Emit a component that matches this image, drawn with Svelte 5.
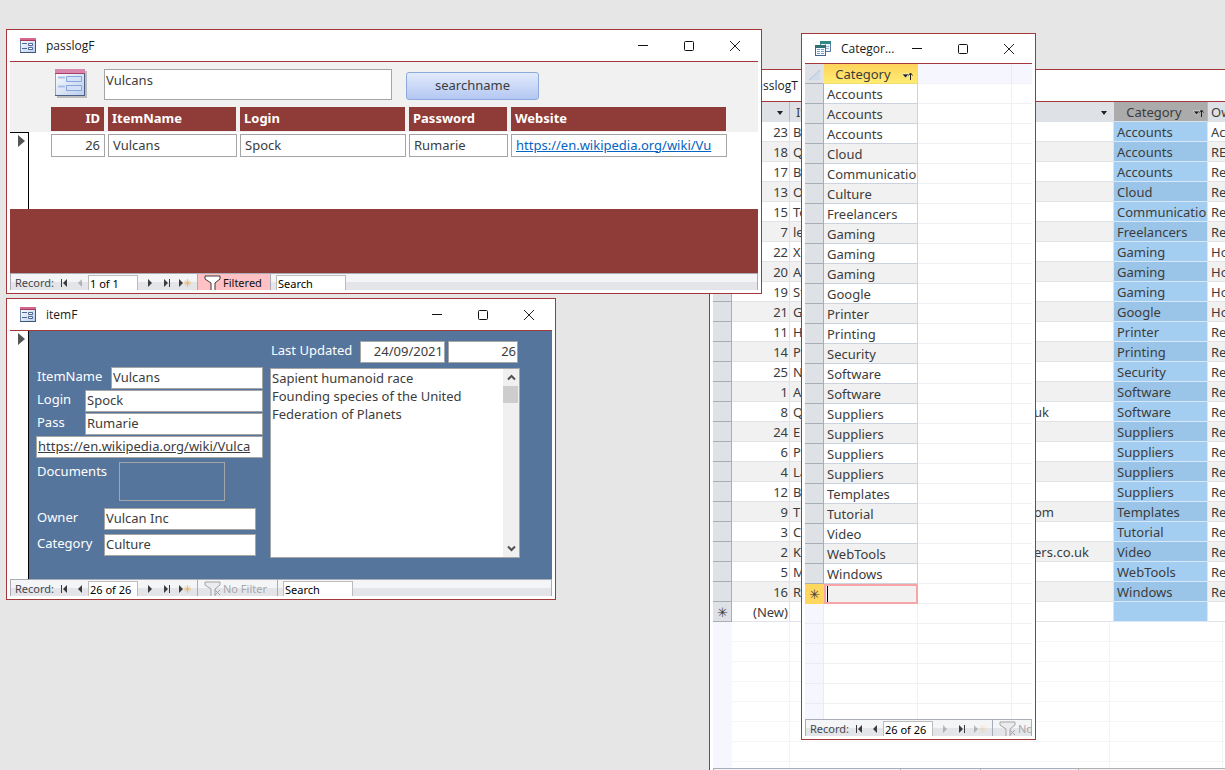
<script>
  const categories = ['Accounts','Accounts','Accounts','Cloud','Communications','Culture','Freelancers','Gaming','Gaming','Gaming','Google','Printer','Printing','Security','Software','Software','Suppliers','Suppliers','Suppliers','Suppliers','Templates','Tutorial','Video','WebTools','Windows'];
  const log = [
    [23,'B','','Accounts','Ac'],[18,'Q','','Accounts','RE'],[17,'B','','Accounts','Re'],[13,'O','','Cloud','Re'],
    [15,'Te','','Communications','Re'],[7,'le','','Freelancers','Re'],[22,'X','','Gaming','Ho'],[20,'A','','Gaming','Ho'],
    [19,'St','','Gaming','Ho'],[21,'G','','Google','Ho'],[11,'H','','Printer','Re'],[14,'P','','Printing','Re'],
    [25,'N','','Security','Re'],[1,'A','','Software','Re'],[8,'Q','uk','Software','Re'],[24,'E','','Suppliers','Re'],
    [6,'P','','Suppliers','Re'],[4,'La','','Suppliers','Re'],[12,'B','','Suppliers','Re'],[9,'T','om','Templates','Re'],
    [3,'C','','Tutorial','Re'],[2,'K','ers.co.uk','Video','Re'],[5,'M','','WebTools','Re'],[16,'R','','Windows','Re']
  ];
</script>

{#snippet formIcon()}
  <svg class="ticon" viewBox="0 0 16 15" width="16" height="15">
    <defs><linearGradient id="fg" x1="0" y1="0" x2="1" y2="1"><stop offset="0" stop-color="#fff" /><stop offset="1" stop-color="#b9cdec" /></linearGradient></defs>
    <rect x=".5" y=".5" width="15" height="14" fill="url(#fg)" stroke="#6f86ad" />
    <path d="M0 0h16v3H0z" fill="#d4668c" /><path d="M0 2h16v1H0z" fill="#a63d5f" />
    <path d="M15.500 3v12M0 14.500h16" stroke="#3f5878" fill="none" />
    <path d="M2 5.500h5M2 10.500h5" stroke="#4d6795" />
    <path d="M8.500 5.500h4v2h-4zM8.500 9.500h4v2h-4z" fill="#fff" stroke="#4d6795" />
  </svg>
{/snippet}

{#snippet sortMark()}
  <svg class="mark" viewBox="0 0 11 9" width="11" height="9"><path d="M0 2h7L3.500 6z" fill="#222" stroke="#fff" stroke-width=".6" /><path d="M8.500 8V1.500M6.500 3.500l2-2.500 2 2.500" fill="none" stroke="#222" /></svg>
{/snippet}

{#snippet titleBar(name, icon)}
  <header class="title">
    {@render icon()}
    <h2>{name}</h2>
    <button aria-label="Minimize"><svg width="12" height="12" viewBox="0 0 12 12"><path d="M1 5.500h10" stroke="#111" /></svg></button>
    <button aria-label="Maximize"><svg width="12" height="12" viewBox="0 0 12 12"><rect x="1.500" y="1.500" width="9" height="9" rx="1" fill="none" stroke="#111" /></svg></button>
    <button aria-label="Close"><svg width="12" height="12" viewBox="0 0 12 12"><path d="M1 1l10 10M11 1L1 11" stroke="#222" /></svg></button>
  </header>
{/snippet}

{#snippet tableIcon()}
  <svg class="ticon" viewBox="0 0 16 15" width="16" height="15">
    <rect x="5.500" y=".5" width="10" height="10" fill="#eef4fb" stroke="#5a7ea8" /><path d="M5 0h11v3H5z" fill="#2f8a86" />
    <path d="M7 5.500h7M7 7.500h7M10.500 3v7" stroke="#9db6d4" />
    <rect x=".5" y="4.500" width="10" height="10" fill="#f7faff" stroke="#48648c" /><path d="M0 4h11v3H0z" fill="#32706f" />
    <path d="M2 8.500h3M6 8.500h3M2 10.500h3M6 10.500h3M2 12.500h3M6 12.500h3" stroke="#7f9cc2" />
  </svg>
{/snippet}

{#snippet recordBar(position, filtered, atFirst, atLast)}
  <footer class="bar">
    <span class="rec">Record:</span>
    <button aria-label="First record"><svg width="8" height="8" viewBox="0 0 8 8"><path d="M0 0h1v8H0zM6 0v8L2 4z" fill="#3c3c40" /></svg></button>
    <button class="prev" class:off={atFirst} aria-label="Previous record"><svg width="5" height="8" viewBox="0 0 5 8"><path d="M4 0v8L0 4z" fill="#3c3c40" /></svg></button>
    <input class="pos" aria-label="Current record" value={position} />
    <button class="next" class:off={atLast} aria-label="Next record"><svg width="5" height="8" viewBox="0 0 5 8"><path d="M0 0v8l4-4z" fill="#3c3c40" /></svg></button>
    <button class="last" aria-label="Last record"><svg width="7" height="8" viewBox="0 0 7 8"><path d="M0 0v8l4-4zM5 0h1v8H5z" fill="#3c3c40" /></svg></button>
    <button class="new" class:off={atLast} aria-label="New record"><svg width="13" height="8" viewBox="0 0 13 8"><path d="M0 0v8l4-4z" fill="#3c3c40" /><path d="M8.500 0v8M5 4h7M6 1.500l5 5M11 1.500l-5 5" stroke="#e8b45c" stroke-width=".8" /></svg></button>
    <button class="filter" class:on={filtered}>
      <svg width="18" height="16" viewBox="0 0 18 16"><path d="M1 1h15v3l-5 4v8H7V8L1 4z" fill={filtered ? '#fff' : '#ececee'} stroke={filtered ? '#3a3a3a' : '#a3a3a8'} />{#if !filtered}<path d="M11 9l5 5M16 9l-5 5" stroke="#a3a3a8" />{/if}</svg>
      <span>{filtered ? 'Filtered' : 'No Filter'}</span>
    </button>
    <input class="search" aria-label="Search records" value="Search" />
  </footer>
{/snippet}

<main>
  <section class="win log">
    {@render titleBar('passlogT', tableIcon)}
    <div class="body sheet">
      <table>
        <colgroup><col class="c-sel" /><col class="c-id" /><col class="c-item" /><col class="c-web" /><col class="c-cat" /><col class="c-own" /></colgroup>
        <thead><tr><th></th><th class="arrow"><i></i></th><th class="left">ItemName</th><th class="arrow nb"><i></i></th><th class="picked">Category {@render sortMark()}</th><th class="own">Owner</th></tr></thead>
        <tbody>
          {#each log as [id, item, web, cat, owner]}
            <tr><th></th><td class="num">{id}</td><td class="nob">{item}</td><td>{web}</td><td class="hl">{cat}</td><td>{owner}</td></tr>
          {/each}
          <tr><th class="star">✳</th><td class="num">(New)</td><td class="nob"></td><td></td><td class="hl"></td><td></td></tr>
        </tbody>
      </table>
      <div class="void"><span></span><span></span><span></span></div>
      <div class="foot">{@render recordBar('', false, false, false)}<div class="hscroll"></div></div>
    </div>
  </section>

  <section class="win pass">
    {@render titleBar('passlogF', formIcon)}
    <div class="body passbody">
      <div class="finder">
        <svg width="34" height="32" viewBox="0 0 34 32">
          <path d="M3 3h30v27H3z" fill="#000" opacity=".22" />
          <rect x="1.500" y="1.500" width="29" height="26" fill="url(#fg)" stroke="#8ca3c8" />
          <path d="M1 1h30v5H1z" fill="#d887aa" /><path d="M1 5h30v1H1z" fill="#a6406c" /><path d="M30.500 6v22M1 27.500h30" stroke="#4a6084" />
          <path d="M4 9.500h7M4 18.500h7" stroke="#a9c0e6" stroke-width="2" />
          <path d="M12.500 8.500h15v5h-15zM12.500 17.500h15v5h-15z" fill="#d3e0f5" stroke="#86a5dc" />
        </svg>
        <input aria-label="Name to find" value="Vulcans" />
        <button>searchname</button>
      </div>
      <div class="detail">
        <div class="selector"><svg width="7" height="12" viewBox="0 0 7 12"><path d="M0 0v12l7-6z" fill="#555" /></svg></div>
        <table>
          <colgroup><col style:width="54px" /><col style:width="129px" /><col style:width="166px" /><col style:width="99px" /><col style:width="216px" /></colgroup>
          <thead><tr><th class="r">ID</th><th>ItemName</th><th>Login</th><th>Password</th><th>Website</th></tr></thead>
          <tbody><tr><td class="r">26</td><td>Vulcans</td><td>Spock</td><td>Rumarie</td><td><a href="https://en.wikipedia.org/wiki/Vulcan">https://en.wikipedia.org/wiki/Vu</a></td></tr></tbody>
        </table>
      </div>
      <div class="band"></div>
      {@render recordBar('1 of 1', true, true, false)}
    </div>
  </section>

  <section class="win item">
    {@render titleBar('itemF', formIcon)}
    <div class="body">
      <div class="form">
        <div class="rail"><svg width="7" height="12" viewBox="0 0 7 12"><path d="M0 0v12l7-6z" fill="#555" /></svg></div>
        <div class="blue">
          <div class="fields">
            <label><span class="w75">ItemName</span><input value="Vulcans" /></label>
            <label><span class="w49">Login</span><input value="Spock" /></label>
            <label><span class="w49">Pass</span><input value="Rumarie" /></label>
            <input class="url" aria-label="Website" value="https://en.wikipedia.org/wiki/Vulca" />
            <div class="docs"><span>Documents</span><button aria-label="Documents"></button></div>
            <label class="short own"><span class="w68">Owner</span><input value="Vulcan Inc" /></label>
            <label class="short"><span class="w68">Category</span><input value="Culture" /></label>
          </div>
          <div class="notes">
            <div class="stamp"><label for="upd">Last Updated</label><input id="upd" value="24/09/2021" /><input class="no" aria-label="Record number" value="26" /></div>
            <div class="memo">
              <textarea aria-label="Notes" value={'Sapient humanoid race\nFounding species of the United\nFederation of Planets'}></textarea>
              <div class="scroll">
                <button aria-label="Scroll up"><svg width="9" height="7" viewBox="0 0 9 7"><path d="M1 5.500L4.500 2 8 5.500" fill="none" stroke="#505050" stroke-width="2" /></svg></button>
                <i></i>
                <button aria-label="Scroll down"><svg width="9" height="7" viewBox="0 0 9 7"><path d="M1 1.500L4.500 5 8 1.500" fill="none" stroke="#505050" stroke-width="2" /></svg></button>
              </div>
            </div>
          </div>
        </div>
      </div>
      {@render recordBar('26 of 26', false, false, false)}
    </div>
  </section>

  <section class="win cats">
    {@render titleBar('Categor...', tableIcon)}
    <div class="body">
      <div class="rows">
        <table>
          <colgroup><col class="k-sel" /><col class="k-cat" /><col /><col class="k-end" /></colgroup>
          <thead><tr><th><svg width="13" height="12" viewBox="0 0 13 12"><path d="M12 1v10H1z" fill="#d0dae8" /><path d="M1 11L12 1" stroke="#b4c6dd" fill="none" /></svg></th><th class="gold">Category {@render sortMark()}</th><th class="pale"></th><th class="pale"></th></tr></thead>
          <tbody>
            {#each categories as c}<tr><th></th><td class="val">{c}</td><td></td><td></td></tr>{/each}
            <tr class="fresh"><th>✳</th><td class="val"><i></i></td><td></td><td></td></tr>
            {#each Array(6) as _}<tr class="blank"><th></th><td></td><td></td><td></td></tr>{/each}
          </tbody>
        </table>
      </div>
      {@render recordBar('26 of 26', false, false, true)}
    </div>
  </section>
</main>

<style>
  :global(body) { background: #e6e6e6; overflow: hidden; }
  main { position: relative; height: 100vh; overflow: hidden; font: 13px/18px "Noto Sans", "Open Sans", sans-serif; color: #3c3c3c; }
  *, *::before { box-sizing: border-box; }
  button { border: 0; background: none; padding: 0; font: inherit; color: inherit; display: flex; align-items: center; justify-content: center; flex: none; }
  input, textarea { font: inherit; color: inherit; border: 1px solid #a5a5a5; border-radius: 0; background: #fff; margin: 0; padding: 0 1px 2px; outline: 0; min-width: 0; }
  table { table-layout: fixed; border-spacing: 0; }
  th, td { padding: 0; font-weight: 400; white-space: nowrap; overflow: hidden; }

  .win { position: absolute; display: flex; flex-direction: column; background: #fff; border: 1px solid #a4373a; padding: 0 3px 3px; }
  .log { left: 709px; top: 69px; right: -140px; bottom: -19px; }
  .pass { left: 6px; top: 29px; width: 756px; height: 265px; }
  .item { left: 6px; top: 298px; width: 550px; height: 302px; }
  .cats { left: 801px; top: 33px; width: 235px; height: 707px; }

  .title { height: 32px; flex: none; display: flex; align-items: center; border-bottom: 1px solid #a4373a; padding-left: 10px; }
  .cats .title { height: 30px; }
  .title .ticon { flex: none; }
  .title h2 { flex: 1; min-width: 0; margin: 0 0 0 10px; font: 12px/18px "Open Sans", sans-serif; color: #1a1a1a; white-space: nowrap; }
  .title button { width: 46px; height: 28px; }
  .body { flex: 1; display: flex; flex-direction: column; min-height: 0; overflow: hidden; }

  .bar { height: 17px; flex: none; display: flex; align-items: flex-start; overflow: hidden; font: 11px/18px "Noto Sans", sans-serif; color: #44484f; border: 1px solid #a9adb8; border-bottom: 0; background: linear-gradient(#f4f5f7 50%, #e4e5e9 50%); padding-left: 4px; }
  .bar button { height: 17px; }
  .rec { width: 46px; flex: none; }
  .prev { margin-left: 9px; }
  .bar input { height: 15px; margin-top: 1px; border-color: #bcbcbc; border-bottom: 0; padding-bottom: 0; color: #000; flex: none; line-height: 14px; }
  .pos { width: 50px; margin-left: 5px !important; }
  .next { margin-left: 10px; }
  .last { margin-left: 11px; }
  .new { margin-left: 8px; }
  .off { opacity: .3; }
  .bar .filter { margin-left: 5px; height: 17px; width: 81px; border: solid #a9adb8; border-width: 0 1px; justify-content: flex-start; padding-left: 6px; gap: 1px; color: #a8a8ac; white-space: nowrap; }
  .bar .filter.on { width: 74px; background: #ffc1c3; color: #111; }
  .filter svg { flex: none; }
  .search { width: 70px; margin-left: 5px !important; }

  .sheet table { width: 650px; }
  .c-sel { width: 19px; } .c-id { width: 58px; } .c-item { width: 241px; } .c-web { width: 83px; } .c-cat { width: 94px; }
  .sheet th, .sheet td { height: 20px; line-height: 18px; border: solid #e1e3e8; border-width: 0 1px 1px 0; padding: 1px 3px 0; }
  .sheet thead th { background: #dee1e6; border-color: #b7bbc4; border-bottom-color: #dee1e6; padding-top: 0; }
  .sheet thead .left { text-align: left; padding-left: 6px; }
  .sheet thead .own { text-align: left; }
  .sheet thead .nb, .sheet thead .left { border-right-color: #dee1e6; }
  .sheet tbody th { background: #dee1e6; border-color: #a9adb5; padding: 0; text-align: center; }
  .arrow { text-align: right; }
  .arrow i { display: inline-block; border: 3px solid transparent; border-top: 4px solid #222; border-bottom: 0; margin: 0 3px 2px 0; }
  .num { text-align: right; }
  .sheet .num { padding-right: 1px; }
  .sheet tr:nth-child(even) td { background: #f1f1f1; }
  .sheet .nob { border-right-color: transparent; }
  .sheet thead .picked { background: #ababab; text-align: right; padding-right: 3px; }
  .sheet tbody tr .hl { background: #a3cef1; border-color: #d9e8f6; text-overflow: clip; }
  .sheet tbody tr:nth-child(even) .hl { background: #9ac5e8; }
  .sheet tbody tr:last-child td { background: #fff; }
  .sheet tbody tr:last-child .hl { background: #a3cef1; }
  .mark { vertical-align: -1px; margin-left: 8px; }
  .void { flex: 1; display: flex; background: repeating-linear-gradient(#fff0 0 19px, #f5f5f7 19px 20px); border-left: 19px solid #f5f6fe; }
  .void span { border-right: 1px solid #f3f3f5; width: 58px; }
  .void span:nth-child(2) { width: 320px; } .void span:nth-child(3) { width: 113px; }
  .foot { display: flex; }
  .foot .bar { width: 366px; }
  .hscroll { flex: 1; background: #f0f0f0; border-top: 1px solid #b0b0b0; }

  .passbody { background: linear-gradient(#f1f1f1 70px, #fff 70px); }
  .finder { display: flex; align-items: flex-start; padding: 7px 0 0 44px; height: 45px; }
  .finder svg { flex: none; margin-top: -1px; }
  .finder input { width: 288px; height: 31px; margin-left: 16px; padding-bottom: 10px; }
  .finder button { width: 133px; height: 28px; margin: 3px 0 0 14px; padding-bottom: 2px; border: 1px solid #8ea9db; border-radius: 3px; background: linear-gradient(#e3ebfc, #b3c7f2); }
  .detail { display: flex; flex: 1; }
  .selector { width: 19px; margin-top: 25px; border: solid #000; border-width: 1px 1px 0 0; padding: 2px 0 0 8px; }
  .selector svg, .rail svg { display: block; }
  .detail table { width: 682px; margin-left: 19px; border-spacing: 3px; margin-top: -3px; align-self: flex-start; }
  .detail th { height: 24px; background: #8f3b38; background-clip: padding-box; border-right: 1px solid transparent; color: #fff; font-weight: 700; text-align: left; padding: 0 4px 2px; }
  .detail td { height: 23px; border: 1px solid #a5a5a5; background: #fff; padding: 0 4px 2px; }
  .detail .r { text-align: right; }
  .detail td a { display: block; overflow: hidden; color: #0563c1; }
  .band { height: 64px; background: #8f3b38; }

  .form { flex: 1; display: flex; }
  .rail { width: 19px; border-right: 1px solid #000; padding: 2px 0 0 8px; }
  .blue { flex: 1; background: #56759d; color: #fff; padding: 10px 0 0 7px; display: flex; gap: 7px; }
  .blue input, .blue textarea { color: #3c3c3c; }
  .fields { width: 227px; padding-top: 26px; display: flex; flex-direction: column; gap: 1px; }
  .fields label { display: flex; }
  .fields label span { flex: none; padding-left: 1px; }
  .fields input { flex: 1; height: 22px; }
  .fields .url { flex: none; text-decoration: underline; }
  .w75 { width: 75px; } .w49 { width: 49px; } .w68 { width: 68px; }
  .docs { display: flex; margin-top: 3px; padding-left: 1px; }
  .docs span { width: 82px; }
  .docs button { width: 106px; height: 39px; border: 1px solid #a5a5a5; }
  .fields .short { width: 220px; margin-top: 3px; }
  .fields .own { margin-top: 6px; }
  .notes { width: 250px; display: flex; flex-direction: column; gap: 5px; }
  .stamp { display: flex; gap: 3px; }
  .stamp label { width: 87px; padding-left: 1px; }
  .stamp input { width: 85px; height: 22px; text-align: right; }
  .stamp .no { width: 70px; }
  .memo { display: flex; height: 190px; border: 1px solid #a5a5a5; background: #fff; }
  .memo textarea { flex: 1; border: 0; resize: none; overflow: hidden; }
  .scroll { width: 16px; background: #f0f0f0; display: flex; flex-direction: column; }
  .scroll button { height: 17px; }
  .scroll button:last-child { margin-top: auto; }
  .scroll i { height: 17px; background: #cdcdcd; margin-right: 1px; }

  .rows { flex: 1; min-height: 0; overflow: hidden; }
  .cats table { width: 100%; }
  .k-sel { width: 19px; } .k-cat { width: 94px; } .k-end { width: 20px; }
  .cats th, .cats td { height: 20px; line-height: 18px; border: solid #f1f1f3; border-width: 0 1px 1px 0; }
  .cats td:last-child, .cats th:last-child { border-right: 0; }
  .cats thead th:first-child, .cats tbody th { background: #dee1e6; border-color: #a9adb5; }
  .cats thead th:first-child { border-right-color: #dee1e6; }
  .cats thead svg { vertical-align: -2px; }
  .cats .pale { background: #f6f7fe; border-right-color: #ebecf2; }
  .cats .gold { background: linear-gradient(#ffd35c, #ffec73); text-align: right; padding-right: 4px; border-color: #f0dc70; }
  .cats .val { padding: 1px 0 0 3px; border-color: #ccd3df; }
  .cats tr:nth-child(even) .val { background: #f1f1f1; }
  .cats .fresh .val { border: 2px solid #f8a5a8; background: #f1f1f1; padding: 0 0 0 1px; }
  .cats .fresh th { background: #ffd75e; border-color: #ffd75e; }
  .fresh i { display: block; height: 16px; width: 1px; background: #000; }
  .cats .blank th { background: #f6f7fe; border-color: #ebecf2; }
</style>
